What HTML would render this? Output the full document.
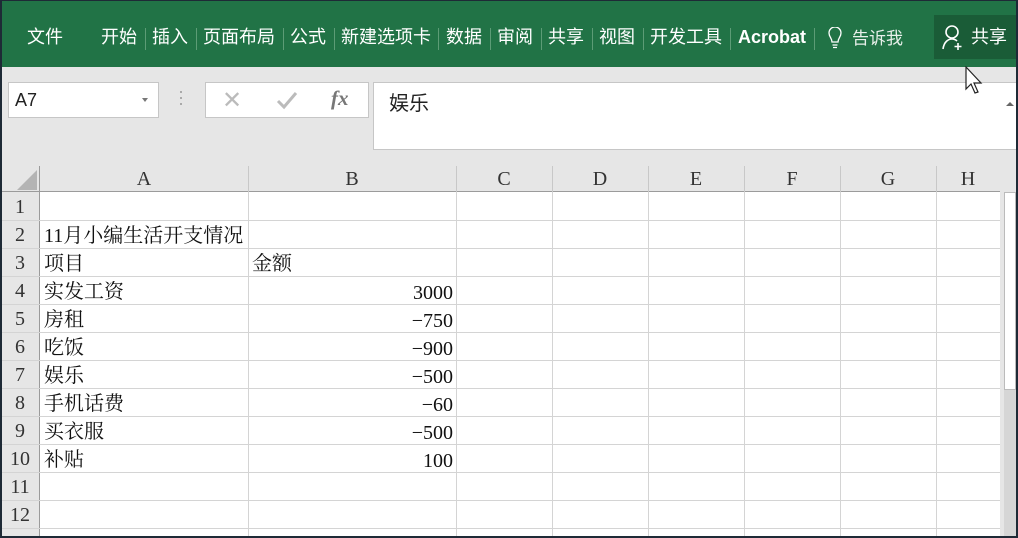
<!DOCTYPE html>
<html><head><meta charset="utf-8"><style>
*{margin:0;padding:0;box-sizing:border-box}
body{width:1018px;height:538px;overflow:hidden;background:#e6e6e6;position:relative;font-family:"Liberation Sans","Noto Sans CJK SC",sans-serif}
.a{position:absolute}
#rib{left:0;top:0;width:1018px;height:67px;background:#217346;color:#fff;font-size:18px}
#rib span{position:absolute;top:24px;line-height:26px;white-space:nowrap}
.sep{position:absolute;top:28px;width:1px;height:22px;background:#5c9c76}
.serif{font-family:"Liberation Serif","Noto Serif CJK SC",serif}
.hl{position:absolute;left:0;width:1000px;height:1px;background:#d4d4d4}
.vl{position:absolute;top:192px;width:1px;height:346px;background:#d4d4d4}
.rn{position:absolute;left:0;width:40px;text-align:center;font-size:20px;line-height:28px;color:#333}
.ch{position:absolute;top:166px;line-height:26px;text-align:center;font-size:20px;color:#333}
.ct{position:absolute;font-size:20px;line-height:28px;color:#111;white-space:nowrap}
</style></head><body>
<div id="rib" class="a">
<span style="left:27px">文件</span>
<span style="left:101px">开始</span><div class="sep" style="left:145px"></div>
<span style="left:152px">插入</span><div class="sep" style="left:196px"></div>
<span style="left:203px">页面布局</span><div class="sep" style="left:283px"></div>
<span style="left:290px">公式</span><div class="sep" style="left:334px"></div>
<span style="left:341px">新建选项卡</span><div class="sep" style="left:438px"></div>
<span style="left:446px">数据</span><div class="sep" style="left:490px"></div>
<span style="left:497px">审阅</span><div class="sep" style="left:541px"></div>
<span style="left:548px">共享</span><div class="sep" style="left:592px"></div>
<span style="left:599px">视图</span><div class="sep" style="left:643px"></div>
<span style="left:650px">开发工具</span><div class="sep" style="left:730px"></div>
<span style="left:738px;font-weight:bold;font-size:18px">Acrobat</span><div class="sep" style="left:814px"></div>
<svg class="a" style="left:828px;top:27px" width="14" height="24" viewBox="0 0 14 24"><path d="M4 15 C4 11 1 10 1 6 A6 6 0 0 1 13 6 C13 10 10 11 10 15 Z M4.5 18 H9.5 M5 20.5 H9" stroke="#fff" stroke-width="1.3" fill="none"/></svg>
<span style="left:852px;top:26px;font-size:17px;color:#e8f0ea">告诉我</span>
<div class="a" style="left:934px;top:15px;width:84px;height:44px;background:#1a5c37"></div>
<svg class="a" style="left:942px;top:24px" width="24" height="26" viewBox="0 0 24 26"><circle cx="10" cy="8" r="6" stroke="#fff" stroke-width="1.6" fill="none"/><path d="M1 25 C2 18 6 15 10 15 C12 15 14 16 15 17 M16 19 V26 M12.5 22.5 H19.5" stroke="#fff" stroke-width="1.6" fill="none"/></svg>
<span style="left:971px;top:24px">共享</span>
</div>
<div class="a" style="left:8px;top:82px;width:151px;height:36px;background:#fff;border:1px solid #c6c6c6"></div>
<div class="a" style="left:15px;top:90px;font-size:18px;color:#222">A7</div>
<div class="a" style="left:142px;top:98px;border:3px solid transparent;border-top:4px solid #777"></div>
<div class="a" style="left:180px;top:91px;width:2px;height:2px;background:#aaa;box-shadow:0 6px #aaa,0 12px #aaa"></div>
<div class="a" style="left:205px;top:82px;width:164px;height:36px;background:#fff;border:1px solid #c6c6c6"></div>
<div class="a" style="left:222px;top:86px;font-size:24px;color:#bbb">✕</div>
<svg class="a" style="left:276px;top:90px" width="22" height="20"><path d="M2 11 L8 17 L20 3" stroke="#bbb" stroke-width="3" fill="none"/></svg>
<div class="a serif" style="left:331px;top:86px;font-size:21px;font-style:italic;font-weight:bold;color:#777">fx</div>
<div class="a" style="left:373px;top:82px;width:645px;height:68px;background:#fff;border:1px solid #c6c6c6;border-right:none"></div>
<div class="a" style="left:389px;top:87px;font-size:20px;color:#222">娱乐</div>
<svg class="a" style="left:965px;top:66px" width="22" height="32"><path d="M1 1 V23 L6 18 L10 27 L13 26 L9 17 L16 17 Z" fill="#fff" stroke="#222" stroke-width="1.2"/></svg>
<div class="a" style="left:1006px;top:98px;border:4px solid transparent;border-bottom:4px solid #666"></div>
<!-- grid -->
<div class="a" style="left:40px;top:192px;width:960px;height:346px;background:#fff"></div>
<div class="a" style="left:17px;top:170px;width:0;height:0;border-left:20px solid transparent;border-bottom:20px solid #b4b4b4"></div>
<div class="a" style="left:0;top:191px;width:1000px;height:1px;background:#9b9b9b"></div>
<div class="a" style="left:39px;top:166px;width:1px;height:372px;background:#9b9b9b"></div>
<div class="vl" style="left:248px"></div><div class="vl" style="left:456px"></div><div class="vl" style="left:552px"></div><div class="vl" style="left:648px"></div><div class="vl" style="left:744px"></div><div class="vl" style="left:840px"></div><div class="vl" style="left:936px"></div>
<div class="a" style="left:248px;top:166px;width:1px;height:26px;background:#c8c8c8"></div><div class="a" style="left:456px;top:166px;width:1px;height:26px;background:#c8c8c8"></div><div class="a" style="left:552px;top:166px;width:1px;height:26px;background:#c8c8c8"></div><div class="a" style="left:648px;top:166px;width:1px;height:26px;background:#c8c8c8"></div><div class="a" style="left:744px;top:166px;width:1px;height:26px;background:#c8c8c8"></div><div class="a" style="left:840px;top:166px;width:1px;height:26px;background:#c8c8c8"></div><div class="a" style="left:936px;top:166px;width:1px;height:26px;background:#c8c8c8"></div>
<div class="ch serif" style="left:40px;width:208px">A</div><div class="ch serif" style="left:248px;width:208px">B</div><div class="ch serif" style="left:456px;width:96px">C</div><div class="ch serif" style="left:552px;width:96px">D</div><div class="ch serif" style="left:648px;width:96px">E</div><div class="ch serif" style="left:744px;width:96px">F</div><div class="ch serif" style="left:840px;width:96px">G</div><div class="ch serif" style="left:936px;width:64px">H</div>
<div class="hl" style="top:220px"></div><div class="hl" style="top:248px"></div><div class="hl" style="top:276px"></div><div class="hl" style="top:304px"></div><div class="hl" style="top:332px"></div><div class="hl" style="top:360px"></div><div class="hl" style="top:388px"></div><div class="hl" style="top:416px"></div><div class="hl" style="top:444px"></div><div class="hl" style="top:472px"></div><div class="hl" style="top:500px"></div><div class="hl" style="top:528px"></div>
<div class="rn serif" style="top:193px">1</div><div class="rn serif" style="top:221px">2</div><div class="rn serif" style="top:249px">3</div><div class="rn serif" style="top:277px">4</div><div class="rn serif" style="top:305px">5</div><div class="rn serif" style="top:333px">6</div><div class="rn serif" style="top:361px">7</div><div class="rn serif" style="top:389px">8</div><div class="rn serif" style="top:417px">9</div><div class="rn serif" style="top:445px">10</div><div class="rn serif" style="top:473px">11</div><div class="rn serif" style="top:501px">12</div>
<div class="ct serif" style="left:44px;top:222px">11月小编生活开支情况</div>
<div class="ct serif" style="left:44px;top:250px">项目</div><div class="ct serif" style="left:252px;top:250px">金额</div>
<div class="ct serif" style="left:44px;top:278px">实发工资</div><div class="ct serif" style="right:565px;top:279px">3000</div>
<div class="ct serif" style="left:44px;top:306px">房租</div><div class="ct serif" style="right:565px;top:307px">−750</div>
<div class="ct serif" style="left:44px;top:334px">吃饭</div><div class="ct serif" style="right:565px;top:335px">−900</div>
<div class="ct serif" style="left:44px;top:362px">娱乐</div><div class="ct serif" style="right:565px;top:363px">−500</div>
<div class="ct serif" style="left:44px;top:390px">手机话费</div><div class="ct serif" style="right:565px;top:391px">−60</div>
<div class="ct serif" style="left:44px;top:418px">买衣服</div><div class="ct serif" style="right:565px;top:419px">−500</div>
<div class="ct serif" style="left:44px;top:446px">补贴</div><div class="ct serif" style="right:565px;top:447px">100</div>
<!-- scrollbar -->
<div class="a" style="left:1000px;top:166px;width:18px;height:372px;background:#e6e6e6"></div>
<div class="a" style="left:1004px;top:192px;width:12px;height:198px;background:#fff;border:1px solid #bbb"></div>
<div class="a" style="left:1004px;top:390px;width:12px;height:148px;background:#d6d6d6"></div>
<!-- outer border -->
<div class="a" style="left:0;top:0;width:1018px;height:538px;border:2px solid #1e2a36;border-top-width:1px"></div>
</body></html>
